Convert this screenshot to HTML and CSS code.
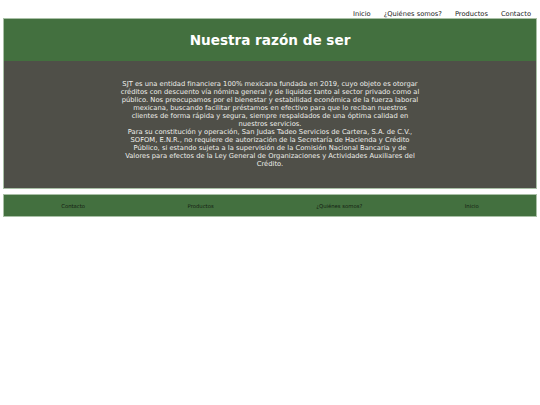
FILE: index.html
```html
<!DOCTYPE html>
<html lang="es">
<head>
<meta charset="utf-8">
<title>Nuestra razón de ser</title>
<link rel="stylesheet" href="styles.css">
</head>
<body>
<nav class="topnav">
  <a href="#">Inicio</a>
  <a href="#">¿Quiénes somos?</a>
  <a href="#">Productos</a>
  <a href="#">Contacto</a>
</nav>
<section class="card">
  <header class="card-head"><h1>Nuestra razón de ser</h1></header>
  <div class="card-body">
    <p>SJT es una entidad financiera 100% mexicana fundada en 2019, cuyo objeto es otorgar<br>créditos con descuento vía nómina general y de liquidez tanto al sector privado como al<br>público. Nos preocupamos por el bienestar y estabilidad económica de la fuerza laboral<br>mexicana, buscando facilitar préstamos en efectivo para que lo reciban nuestros<br>clientes de forma rápida y segura, siempre respaldados de una óptima calidad en<br>nuestros servicios.<br>Para su constitución y operación, San Judas Tadeo Servicios de Cartera, S.A. de C.V.,<br>SOFOM, E.N.R., no requiere de autorización de la Secretaría de Hacienda y Crédito<br>Público, si estando sujeta a la supervisión de la Comisión Nacional Bancaria y de<br>Valores para efectos de la Ley General de Organizaciones y Actividades Auxiliares del<br>Crédito.</p>
  </div>
</section>
<footer class="footnav">
  <a href="#">Contacto</a>
  <a href="#">Productos</a>
  <a href="#">¿Quiénes somos?</a>
  <a href="#">Inicio</a>
</footer>
</body>
</html>
```
FILE: styles.css
```css
html, body { margin: 0; padding: 0; background: #fff; }
body { font-family: "DejaVu Sans", sans-serif; padding: 0 3px; }
a { text-decoration: none; color: inherit; }
.topnav {
  display: flex; justify-content: flex-end; gap: 13px;
  padding: 10px 6px 0 0; height: 8px;
  font-size: 6.7px; line-height: 9px; color: #222;
}
.topnav a { color: #222; }
.card { border: 1px solid #a9c0a6; }
.card-head { background: #43703f; height: 42px; display: flex; align-items: center; justify-content: center; }
.card-head h1 { margin: 0; color: #fff; font-size: 13.6px; font-weight: bold; }
.card-body { background: #4f4f48; padding: 19px 0 20px; display: flex; justify-content: center; }
.card-body p { margin: 0; text-align: center; color: #eeeeea; font-size: 6.75px; line-height: 8px; white-space: nowrap; }
.footnav {
  margin-top: 5px; border: 1px solid #a9c0a6; background: #43703f;
  display: flex; justify-content: space-around; height: 21px; align-items: center;
  padding: 0 6px;
  font-size: 5.3px; color: #142012;
}
```
